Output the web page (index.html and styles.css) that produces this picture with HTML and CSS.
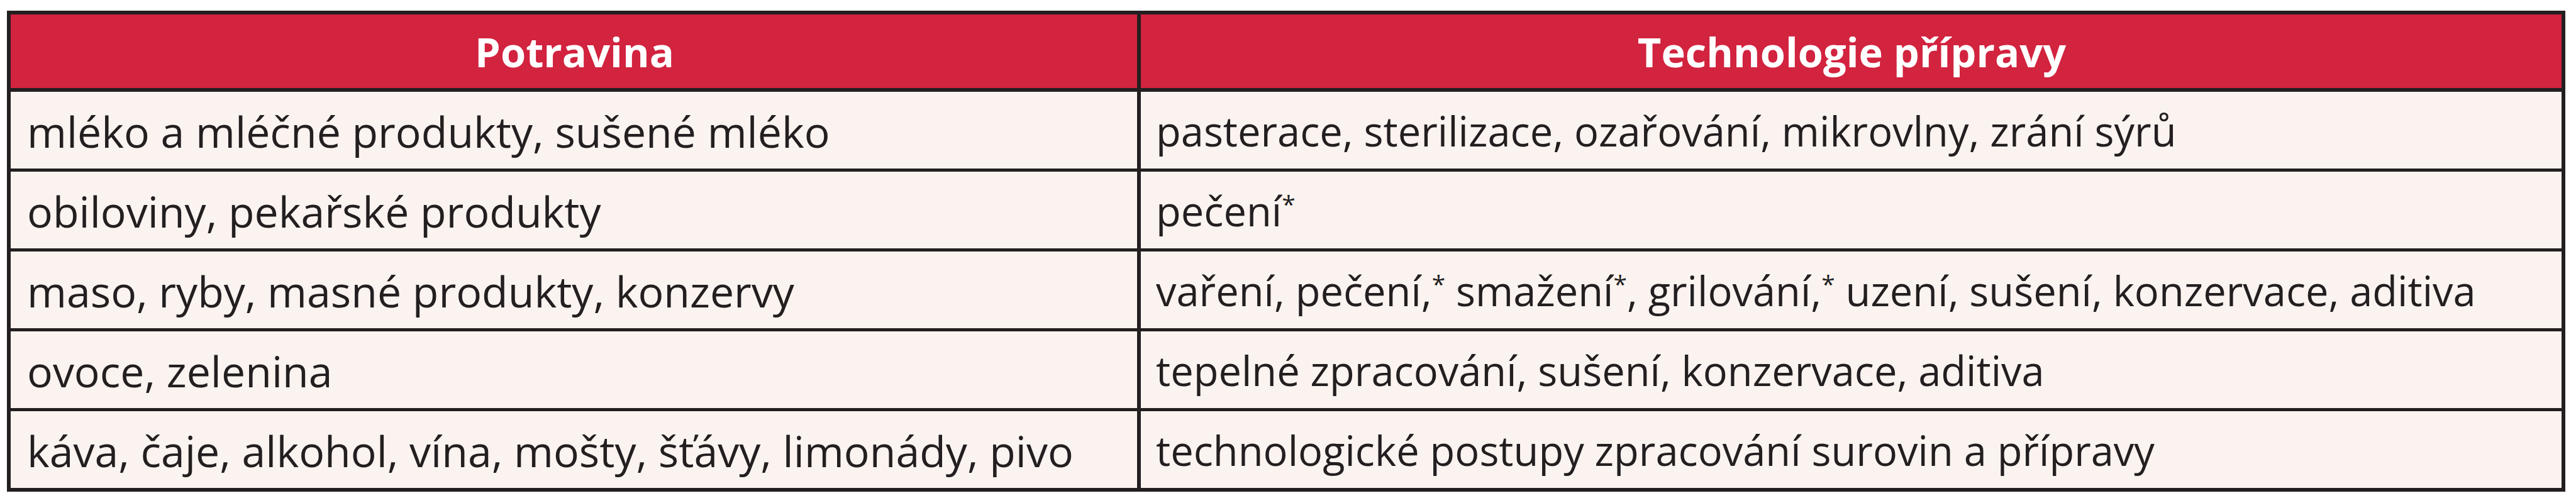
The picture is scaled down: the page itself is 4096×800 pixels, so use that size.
FILE: index.html
```html
<!DOCTYPE html>
<html lang="cs">
<head>
<meta charset="utf-8">
<title>Potravina – Technologie přípravy</title>
<link rel="stylesheet" href="styles.css">
</head>
<body>
<table class="food-table">
  <thead>
    <tr>
      <th class="col-food">Potravina</th>
      <th class="col-tech">Technologie přípravy</th>
    </tr>
  </thead>
  <tbody>
    <tr>
      <td class="col-food">mléko a mléčné produkty, sušené mléko</td>
      <td class="col-tech">pasterace, sterilizace, ozařování, mikrovlny, zrání sýrů</td>
    </tr>
    <tr>
      <td class="col-food">obiloviny, pekařské produkty</td>
      <td class="col-tech">pečení<span class="fn">*</span></td>
    </tr>
    <tr>
      <td class="col-food">maso, ryby, masné produkty, konzervy</td>
      <td class="col-tech">vaření, pečení,<span class="fn">*</span> smažení<span class="fn">*</span>, grilování,<span class="fn">*</span> uzení, sušení, konzervace, aditiva</td>
    </tr>
    <tr>
      <td class="col-food">ovoce, zelenina</td>
      <td class="col-tech">tepelné zpracování, sušení, konzervace, aditiva</td>
    </tr>
    <tr>
      <td class="col-food">káva, čaje, alkohol, vína, mošty, šťávy, limonády, pivo</td>
      <td class="col-tech">technologické postupy zpracování surovin a přípravy</td>
    </tr>
  </tbody>
</table>
</body>
</html>
```
FILE: styles.css
```css
html, body {
  margin: 0;
  padding: 0;
  background: #ffffff;
}

body {
  padding: 17px 0 0 11px;
  font-family: "Open Sans", "DejaVu Sans", sans-serif;
  color: #231f20;
}

.food-table {
  box-sizing: border-box;
  width: 4068px;
  border: 6px solid #231f20;
  border-collapse: separate;
  border-spacing: 0;
  table-layout: fixed;
}

.food-table th,
.food-table td {
  box-sizing: border-box;
  padding: 0 24px 0 26px;
  vertical-align: middle;
  white-space: nowrap;
  text-align: left;
}

.food-table th {
  height: 117px;
  background: #d2233f;
  color: #ffffff;
  font-weight: bold;
  font-size: 65px;
  text-align: center;
  padding-top: 0;
}

.food-table td {
  height: 127px;
  background: #fbf3f0;
  font-size: 68px;
  border-top: 5px solid #231f20;
  padding-top: 2px;
}

.food-table td.col-tech {
  font-size: 65px;
  padding-left: 24px;
}

.food-table tbody tr:first-child td {
  border-top-width: 6px;
  height: 128px;
}

.food-table .col-food {
  width: 1797px;
  border-right: 6px solid #231f20;
}

.food-table .col-tech {
  width: 2259px;
}

.fn {
  font-size: 0.6em;
  line-height: 0;
  vertical-align: 0.55em;
}
```
